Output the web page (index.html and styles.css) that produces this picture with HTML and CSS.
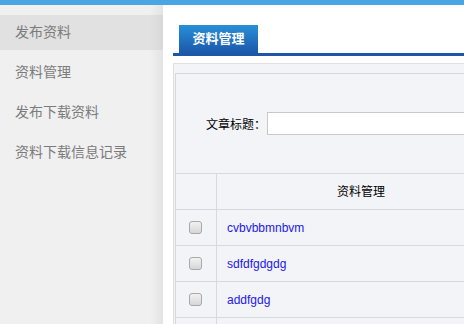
FILE: index.html
```html
<!DOCTYPE html>
<html lang="zh-CN">
<head>
    <meta charset="UTF-8">
    <title>资料管理</title>
    <link rel="stylesheet" href="styles.css">
</head>
<body>
    <div class="topbar"></div>

    <div class="layout">
        <div class="sidebar">
            <ul>
                <li class="active"><a href="#">发布资料</a></li>
                <li><a href="#">资料管理</a></li>
                <li><a href="#">发布下载资料</a></li>
                <li><a href="#">资料下载信息记录</a></li>
            </ul>
        </div>

        <div class="main">
            <div class="tabs">
                <span class="tab">资料管理</span>
            </div>

            <div class="panel">
                <div class="panel-inner">
                    <div class="search">
                        <label>文章标题：</label>
                        <input type="text">
                    </div>

                    <table class="list">
                        <tr>
                            <th class="check-col"></th>
                            <th class="title-col">资料管理</th>
                            <th></th>
                        </tr>
                        <tr>
                            <td class="check-col"><input type="checkbox"></td>
                            <td><a href="#">cvbvbbmnbvm</a></td>
                            <td></td>
                        </tr>
                        <tr>
                            <td class="check-col"><input type="checkbox"></td>
                            <td><a href="#">sdfdfgdgdg</a></td>
                            <td></td>
                        </tr>
                        <tr>
                            <td class="check-col"><input type="checkbox"></td>
                            <td><a href="#">addfgdg</a></td>
                            <td></td>
                        </tr>
                        <tr>
                            <td class="check-col"></td>
                            <td></td>
                            <td></td>
                        </tr>
                    </table>
                </div>
            </div>
        </div>
    </div>
</body>
</html>
```

FILE: styles.css
```css
/* Base */
body {
    margin: 0;
    overflow: hidden;
    font-family: "Liberation Sans", "Noto Sans CJK SC", sans-serif;
    background: #fff;
}

.topbar {
    height: 5px;
    background: #4aa6e3;
}

.layout {
    display: flex;
    height: calc(100vh - 5px);
}

/* Sidebar */
.sidebar {
    width: 163px;
    flex-shrink: 0;
    padding-top: 10px;
    background: linear-gradient(to right, #f0f0f0 150px, #e3e3e3 163px);
}
.sidebar ul {
    list-style: none;
    margin: 0;
    padding: 0;
}
.sidebar li {
    height: 35px;
    margin-bottom: 5px;
}
.sidebar li a {
    display: block;
    padding-left: 15px;
    line-height: 35px;
    font-size: 14px;
    color: #7b7b7b;
    text-decoration: none;
}
.sidebar li.active {
    background: linear-gradient(to right, #e1e1e1 150px, #d8d8d8 163px);
}

/* Main area */
.main {
    flex: 1;
    min-width: 0;
    overflow: hidden;
    padding: 20px 0 0 10px;
}

.tabs {
    display: flex;
    padding-left: 6px;
    border-bottom: 3px solid #1b56a8;
}
.tab {
    width: 79px;
    height: 28px;
    line-height: 28px;
    text-align: center;
    font-size: 13px;
    font-weight: bold;
    color: #fff;
    background: linear-gradient(to bottom, #2890d8, #1b58aa);
}

/* Panel */
.panel {
    width: 700px;
    margin-top: 7px;
    padding: 9px 0 0 1px;
    border: 1px solid #e0e0e0;
    background: #f3f4f8;
}
.panel-inner {
    border: 1px solid #d9d9d9;
    border-right: none;
}

.search {
    height: 99px;
    display: flex;
    align-items: center;
    padding-left: 30px;
    font-size: 12px;
    color: #000;
}
.search input {
    width: 300px;
    height: 21px;
    margin: 0 0 0 1px;
    padding: 0 4px;
    border: 1px solid #c8c8c8;
    background: #fff;
}

/* List table */
.list {
    width: 100%;
    border-collapse: separate;
    border-spacing: 0;
    border-top: 1px solid #d9d9d9;
    font-size: 12px;
    line-height: 16px;
}
.list th,
.list td {
    height: 35px;
    padding: 0;
    border-bottom: 1px solid #d9d9d9;
}
.list th {
    font-weight: normal;
    color: #000;
}
.list td {
    padding-left: 10px;
}
.list .check-col {
    width: 40px;
    padding: 0;
    text-align: center;
    border-right: 1px solid #d9d9d9;
}
.list .title-col {
    width: 288px;
}
.list a {
    color: #2218e8;
    text-decoration: none;
}

.list input[type="checkbox"] {
    appearance: none;
    display: block;
    width: 13px;
    height: 13px;
    margin: 0 auto;
    position: relative;
    left: -1px;
    border: 1px solid #a8a8a8;
    border-radius: 3px;
    background: linear-gradient(to bottom, #f2f2f2, #d6d6d6);
}
```
